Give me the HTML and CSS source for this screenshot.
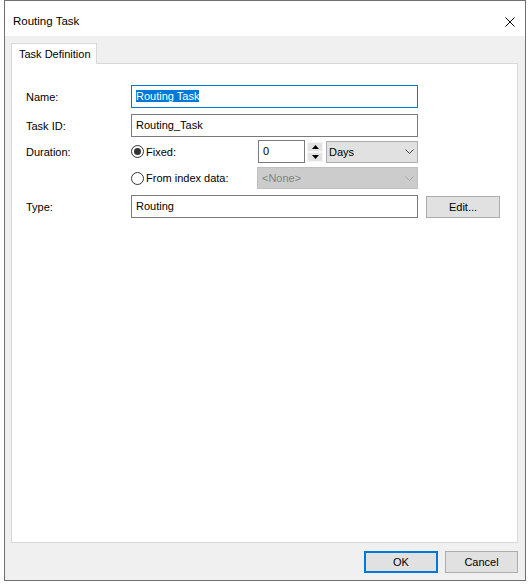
FILE: index.html
```html
<!DOCTYPE html>
<html lang="en">
  <head>
    <meta charset="UTF-8" />
    <meta name="viewport" content="width=device-width, initial-scale=1.0" />
    <title>Routing Task</title>
    <link rel="stylesheet" href="styles.css">
  </head>
  <body>
    <div class="window">
      <!-- Title bar -->
      <div class="titlebar">
        <span class="title">Routing Task</span>
        <svg class="close" width="10" height="10" viewBox="0 0 10 10">
          <path d="M0.5 0.5L9.5 9.5M9.5 0.5L0.5 9.5" stroke="#000" stroke-width="1" fill="none" />
        </svg>
      </div>

      <!-- Tabs -->
      <div class="tabs">
        <div class="tab">Task Definition</div>
      </div>

      <!-- Tab page -->
      <div class="panel">
        <div class="row row-name">
          <span class="label">Name:</span>
          <div class="field wide focus"><span class="selected">Routing Task</span></div>
        </div>

        <div class="row row-id">
          <span class="label">Task ID:</span>
          <div class="field wide">Routing_Task</div>
        </div>

        <div class="row row-duration">
          <span class="label">Duration:</span>
          <div class="option">
            <span class="radio checked"></span>
            <span>Fixed:</span>
          </div>
          <div class="field number">0</div>
          <div class="spin">
            <div class="spin-btn">
              <svg width="7" height="4" viewBox="0 0 7 4"><polygon points="0,4 7,4 3.5,0" fill="#000" /></svg>
            </div>
            <div class="spin-btn">
              <svg width="7" height="4" viewBox="0 0 7 4"><polygon points="0,0 7,0 3.5,4" fill="#000" /></svg>
            </div>
          </div>
          <div class="select days">
            <span>Days</span>
            <svg class="chev" width="9" height="5" viewBox="0 0 9 5">
              <polyline points="0.5,0.5 4.5,4.5 8.5,0.5" stroke="#444" fill="none" />
            </svg>
          </div>
        </div>

        <div class="row row-index">
          <span class="label"></span>
          <div class="option index">
            <span class="radio"></span>
            <span>From index data:</span>
          </div>
          <div class="select disabled">
            <span>&lt;None&gt;</span>
            <svg class="chev" width="9" height="5" viewBox="0 0 9 5">
              <polyline points="0.5,0.5 4.5,4.5 8.5,0.5" stroke="#a8a8a8" fill="none" />
            </svg>
          </div>
        </div>

        <div class="row row-type">
          <span class="label">Type:</span>
          <div class="field wide">Routing</div>
          <button class="btn edit">Edit...</button>
        </div>
      </div>

      <!-- Dialog buttons -->
      <div class="buttons">
        <button class="btn ok">OK</button>
        <button class="btn cancel">Cancel</button>
      </div>
    </div>
  </body>
</html>
```

FILE: styles.css
```css
* {
  box-sizing: border-box;
}
body {
  margin: 0;
  background-color: #fff;
  font-family: "Liberation Sans", Arial, sans-serif;
  font-size: 11px;
  color: #000;
}
.window {
  margin-left: 4px;
  width: 522px;
  height: 581px;
  border: 1px solid #6f6f6f;
  background-color: #f0f0f0;
  display: flex;
  flex-direction: column;
}
.titlebar {
  flex: none;
  height: 35px;
  background-color: #fff;
  display: flex;
  align-items: flex-start;
  padding: 13px 10px 0 8px;
}
.title {
  font-size: 11.5px;
  line-height: 14px;
}
.close {
  margin-left: auto;
  margin-top: 3px;
}
.tabs {
  flex: none;
  display: flex;
  margin: 7px 0 0 6px;
}
.tab {
  position: relative;
  width: 86px;
  height: 21px;
  margin-bottom: -1px;
  padding: 4px 0 0 7px;
  line-height: 13px;
  background-color: #fff;
  border: 1px solid #d9d9d9;
  border-bottom: none;
}
.panel {
  flex: 1;
  margin: 0 7px 0 6px;
  padding: 21px 0 0 14px;
  background-color: #fff;
  border: 1px solid #d9d9d9;
}
.row {
  display: flex;
  align-items: center;
  height: 23px;
}
.row-id {
  margin-top: 6px;
}
.row-duration {
  margin-top: 3px;
}
.row-index {
  margin-top: 4px;
  height: 22px;
}
.row-type {
  margin-top: 6px;
}
.label {
  flex: none;
  width: 105px;
}
.field {
  flex: none;
  height: 23px;
  padding: 0 4px;
  line-height: 21px;
  white-space: nowrap;
  background-color: #fff;
  border: 1px solid #7a7a7a;
}
.field.wide {
  width: 287px;
}
.field.focus {
  border-color: #0078d7;
}
.selected {
  background-color: #0078d7;
  color: #fff;
}
.option {
  flex: none;
  width: 127px;
  display: flex;
  align-items: center;
  gap: 2px;
}
.option.index {
  width: 126px;
}
.radio {
  width: 13px;
  height: 13px;
  border: 1px solid #333;
  border-radius: 50%;
  background-color: #fff;
  display: flex;
  align-items: center;
  justify-content: center;
}
.radio.checked::after {
  content: "";
  width: 7px;
  height: 7px;
  border-radius: 50%;
  background-color: #333;
}
.field.number {
  width: 47px;
}
.spin {
  flex: none;
  width: 16px;
  height: 20px;
  margin-left: 2px;
  display: flex;
  flex-direction: column;
}
.spin-btn {
  height: 10px;
  display: flex;
  align-items: center;
  justify-content: center;
  background-color: #e3e3e3;
  border: 1px solid #f4f4f4;
}
.select {
  flex: none;
  height: 22px;
  display: flex;
  align-items: center;
  padding: 0 3px 0 2px;
  background-color: #e1e1e1;
  border: 1px solid #adadad;
}
.select .chev {
  margin-left: auto;
}
.select.days {
  width: 92px;
  margin-left: 3px;
}
.select.disabled {
  width: 161px;
  padding-left: 4px;
  background-color: #cccccc;
  border-color: #bfbfbf;
  color: #838383;
}
.btn {
  height: 22px;
  padding: 0;
  font: inherit;
  color: #000;
  background-color: #e1e1e1;
  border: 1px solid #adadad;
}
.btn.edit {
  width: 74px;
  margin-left: 8px;
}
.buttons {
  flex: none;
  height: 37px;
  display: flex;
  justify-content: flex-end;
  align-items: flex-start;
  gap: 7px;
  padding: 8px 7px 0 0;
}
.btn.ok {
  width: 74px;
  border: 2px solid #0078d7;
}
.btn.cancel {
  width: 73px;
}
```
